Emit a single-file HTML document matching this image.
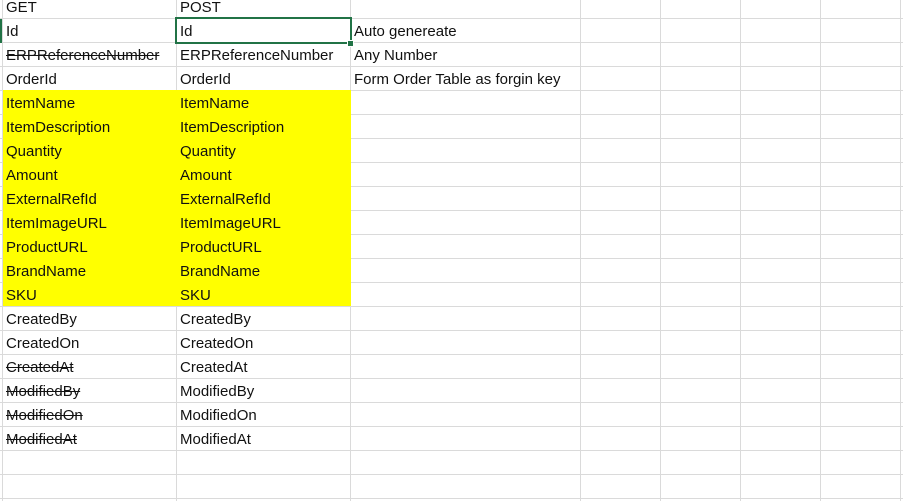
<!DOCTYPE html>
<html><head><style>
body{margin:0;width:903px;height:501px;overflow:hidden;background:#fff;position:relative;font-family:"Liberation Sans",sans-serif;font-size:15px;color:#111;}
.h{position:absolute;left:0;width:903px;height:1px;background:#dadada}
.v{position:absolute;top:0;height:501px;width:1px;background:#dadada}
.t{position:absolute;white-space:nowrap;line-height:24px;z-index:5}
.s{text-decoration:line-through}
</style></head><body>
<div id="g"></div>
<div style="position:absolute;left:3px;top:90px;width:348px;height:216px;background:#ffff00;z-index:2"></div>
<div style="position:absolute;left:0;top:19px;width:2px;height:24px;background:#217346;z-index:3"></div>
<div style="position:absolute;left:175px;top:17px;width:173px;height:23px;border:2px solid #217346;z-index:3"></div>
<div style="position:absolute;left:347px;top:40px;width:5px;height:5px;background:#217346;border:1px solid #fff;z-index:4"></div>
<script>
var h='';
for(var y=18;y<501;y+=24)h+='<div class="h" style="top:'+y+'px"></div>';
[2,176,350,580,660,740,820,900].forEach(function(x){h+='<div class="v" style="left:'+x+'px"></div>'});
var A=[["GET","POST",""],["Id","Id","Auto genereate"],["~ERPReferenceNumber","ERPReferenceNumber","Any Number"],["OrderId","OrderId","Form Order Table as forgin key"],["ItemName","ItemName"],["ItemDescription","ItemDescription"],["Quantity","Quantity"],["Amount","Amount"],["ExternalRefId","ExternalRefId"],["ItemImageURL","ItemImageURL"],["ProductURL","ProductURL"],["BrandName","BrandName"],["SKU","SKU"],["CreatedBy","CreatedBy"],["CreatedOn","CreatedOn"],["~CreatedAt","CreatedAt"],["~ModifiedBy","ModifiedBy"],["~ModifiedOn","ModifiedOn"],["~ModifiedAt","ModifiedAt"]];
A.forEach(function(r,i){var top=-4+24*i;[6,180,354].forEach(function(x,j){var s=r[j];if(!s)return;var c='t';if(s[0]=='~'){s=s.slice(1);c+=' s'}h+='<div class="'+c+'" style="left:'+x+'px;top:'+top+'px">'+s+'</div>'})});
document.getElementById('g').outerHTML=h;
</script>
</body></html>
